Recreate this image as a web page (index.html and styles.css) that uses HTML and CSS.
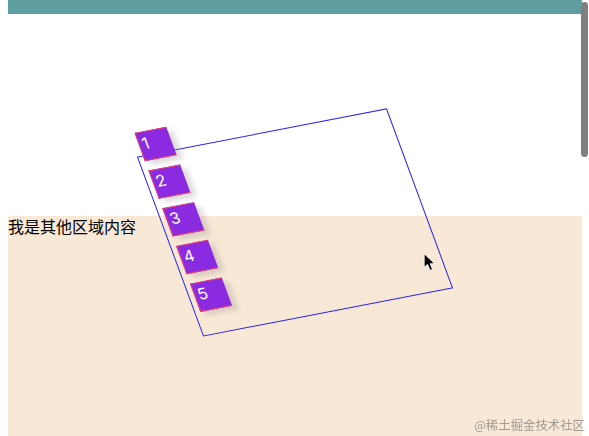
FILE: index.html
```html
<!DOCTYPE html>
<html lang="zh-CN">
<head>
<meta charset="utf-8">
<title>拖拽示例</title>
<link rel="stylesheet" href="styles.css">
</head>
<body>
<div class="topbar"></div>
<section class="stage">
  <div class="panel">
    <ul class="list">
      <li class="item">1</li>
      <li class="item">2</li>
      <li class="item">3</li>
      <li class="item">4</li>
      <li class="item">5</li>
    </ul>
  </div>
</section>
<section class="other">我是其他区域内容</section>
<div class="thumb"></div>
<svg class="cursor" width="14" height="21" viewBox="0 0 13 19" aria-hidden="true">
  <path d="M1 1 L1 14.5 L4.2 11.6 L6.5 17 L9 16 L6.8 10.8 L11 10.6 Z" fill="#000" stroke="#f4f0ea" stroke-width="1" stroke-linejoin="round"/>
</svg>
<div class="watermark">@稀土掘金技术社区</div>
</body>
</html>
```
FILE: styles.css
```css
html, body {
  height: 100%;
  overflow: hidden;
}
body {
  margin: 0 7px 0 8px;
  background: #fff;
  color: #000;
  font-family: "Noto Sans CJK SC", "Liberation Sans", sans-serif;
  font-size: 16px;
}
.topbar {
  height: 14px;
  background: #5f9ea0;
}
.stage {
  height: 202px;
  padding: 112.6px 0 0 161px;
  box-sizing: border-box;
}
.panel {
  box-sizing: border-box;
  width: 251.5px;
  height: 191px;
  border: 1.4px solid #2a22e6;
  transform: matrix(0.992, -0.192, 0.347, 0.942, 0, 0);
}
.list {
  list-style: none;
  margin: -25.5px 0 0 4.5px;
  padding: 0;
  display: flex;
  flex-direction: column;
  gap: 10px;
}
.item {
  box-sizing: border-box;
  width: 32px;
  height: 30px;
  padding-left: 3px;
  line-height: 22px;
  background: #8a2be2;
  border: 1px solid #e8406e;
  border-width: 1px 0 1px 1px;
  color: #fff;
  font-family: "Inter", "Liberation Sans", sans-serif;
  box-shadow: 5px 5px 5px rgba(150, 140, 140, 0.3);
}
.other {
  height: 220px;
  background: #f8e9d7;
  line-height: 21px;
}
.thumb {
  position: fixed;
  top: 2px;
  right: 1px;
  width: 7px;
  height: 155px;
  border-radius: 4px;
  background: #7f7f7f;
}
.cursor {
  position: fixed;
  left: 423px;
  top: 252px;
}
.watermark {
  position: fixed;
  right: 4px;
  top: 416px;
  font-size: 12.4px;
  line-height: 18px;
  color: rgba(100, 100, 100, 0.6);
  font-family: "Noto Sans CJK SC", sans-serif;
}
```
